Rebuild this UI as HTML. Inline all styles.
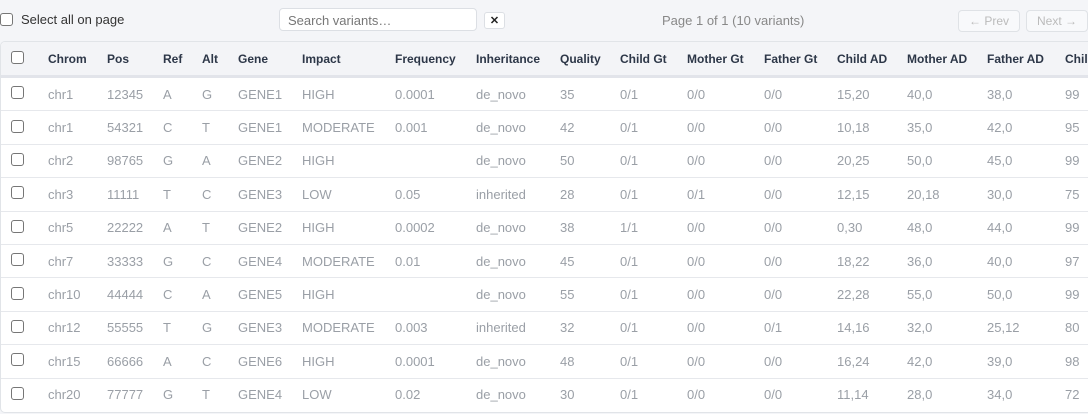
<!DOCTYPE html>
<html><head><style>
body{margin:0;background:#f4f5f8;font-family:"Liberation Sans",sans-serif;width:1088px;height:414px;overflow:hidden;position:relative}
.top{position:absolute;top:0;left:0;right:0;height:41px}
.sel{position:absolute;left:0;top:12px;font-size:13px;color:#333;display:flex;align-items:center}
.cb{display:inline-block;width:11px;height:11px;border:1px solid #767676;border-radius:3px;background:#fff;box-sizing:content-box}
.search{position:absolute;left:279px;top:8px;width:198px;height:23px;border:1px solid #dcdfe4;border-radius:4px;background:#fff;font-size:13px;color:#777;line-height:23px;padding-left:8px;box-sizing:border-box}
.x{position:absolute;left:484px;top:12px;width:21px;height:17px;border:1px solid #dcdfe4;border-radius:3px;background:#fff;font-size:11px;text-align:center;line-height:17px;font-weight:bold;box-sizing:border-box;color:#222}
.pg{position:absolute;left:662px;top:13px;font-size:13px;color:#888}
.btn{position:absolute;top:10px;height:22px;border:1px solid #dfe2e6;border-radius:4px;background:#f8f9fb;font-size:12px;color:#bbb;line-height:21px;text-align:center;box-sizing:border-box}
.tw{position:absolute;left:0;top:41px;width:1130px;height:372px;background:#fff;border:1px solid #e1e4e8;border-radius:5px;overflow:hidden;box-sizing:border-box}
table{border-collapse:collapse;table-layout:fixed;font-size:13px;width:1114px}
th{background:#f3f4f7;color:#2d3748;font-weight:bold;font-size:12px;text-align:left;height:33px;padding:0 0 0 10px;border-bottom:3px solid #e2e4ea;white-space:nowrap;overflow:hidden}
td{color:#9a9fa6;height:32.4px;padding:0 0 0 10px;border-bottom:1px solid #e6e8ec;white-space:nowrap;overflow:hidden}
tr:last-child td{border-bottom:none}
</style></head><body>
<div class="top">
<div class="sel"><span class="cb" style="margin-right:8px"></span>Select all on page</div>
<div class="search">Search variants…</div>
<div class="x">✕</div>
<div class="pg">Page 1 of 1 (10 variants)</div>
<div class="btn" style="left:958px;width:62px">← Prev</div>
<div class="btn" style="left:1026px;width:62px">Next →</div>
</div>
<div class="tw"><table>
<colgroup><col style="width:37px"><col style="width:59px"><col style="width:56px"><col style="width:39px"><col style="width:36px"><col style="width:64px"><col style="width:93px"><col style="width:81px"><col style="width:84px"><col style="width:60px"><col style="width:67px"><col style="width:77px"><col style="width:73px"><col style="width:70px"><col style="width:80px"><col style="width:78px"><col style="width:60px"></colgroup>
<tr><th><span class="cb"></span></th><th>Chrom</th><th>Pos</th><th>Ref</th><th>Alt</th><th>Gene</th><th>Impact</th><th>Frequency</th><th>Inheritance</th><th>Quality</th><th>Child Gt</th><th>Mother Gt</th><th>Father Gt</th><th>Child AD</th><th>Mother AD</th><th>Father AD</th><th>Child GQ</th></tr>
<tr><td><span class="cb"></span></td><td>chr1</td><td>12345</td><td>A</td><td>G</td><td>GENE1</td><td>HIGH</td><td>0.0001</td><td>de_novo</td><td>35</td><td>0/1</td><td>0/0</td><td>0/0</td><td>15,20</td><td>40,0</td><td>38,0</td><td>99</td></tr>
<tr><td><span class="cb"></span></td><td>chr1</td><td>54321</td><td>C</td><td>T</td><td>GENE1</td><td>MODERATE</td><td>0.001</td><td>de_novo</td><td>42</td><td>0/1</td><td>0/0</td><td>0/0</td><td>10,18</td><td>35,0</td><td>42,0</td><td>95</td></tr>
<tr><td><span class="cb"></span></td><td>chr2</td><td>98765</td><td>G</td><td>A</td><td>GENE2</td><td>HIGH</td><td></td><td>de_novo</td><td>50</td><td>0/1</td><td>0/0</td><td>0/0</td><td>20,25</td><td>50,0</td><td>45,0</td><td>99</td></tr>
<tr><td><span class="cb"></span></td><td>chr3</td><td>11111</td><td>T</td><td>C</td><td>GENE3</td><td>LOW</td><td>0.05</td><td>inherited</td><td>28</td><td>0/1</td><td>0/1</td><td>0/0</td><td>12,15</td><td>20,18</td><td>30,0</td><td>75</td></tr>
<tr><td><span class="cb"></span></td><td>chr5</td><td>22222</td><td>A</td><td>T</td><td>GENE2</td><td>HIGH</td><td>0.0002</td><td>de_novo</td><td>38</td><td>1/1</td><td>0/0</td><td>0/0</td><td>0,30</td><td>48,0</td><td>44,0</td><td>99</td></tr>
<tr><td><span class="cb"></span></td><td>chr7</td><td>33333</td><td>G</td><td>C</td><td>GENE4</td><td>MODERATE</td><td>0.01</td><td>de_novo</td><td>45</td><td>0/1</td><td>0/0</td><td>0/0</td><td>18,22</td><td>36,0</td><td>40,0</td><td>97</td></tr>
<tr><td><span class="cb"></span></td><td>chr10</td><td>44444</td><td>C</td><td>A</td><td>GENE5</td><td>HIGH</td><td></td><td>de_novo</td><td>55</td><td>0/1</td><td>0/0</td><td>0/0</td><td>22,28</td><td>55,0</td><td>50,0</td><td>99</td></tr>
<tr><td><span class="cb"></span></td><td>chr12</td><td>55555</td><td>T</td><td>G</td><td>GENE3</td><td>MODERATE</td><td>0.003</td><td>inherited</td><td>32</td><td>0/1</td><td>0/0</td><td>0/1</td><td>14,16</td><td>32,0</td><td>25,12</td><td>80</td></tr>
<tr><td><span class="cb"></span></td><td>chr15</td><td>66666</td><td>A</td><td>C</td><td>GENE6</td><td>HIGH</td><td>0.0001</td><td>de_novo</td><td>48</td><td>0/1</td><td>0/0</td><td>0/0</td><td>16,24</td><td>42,0</td><td>39,0</td><td>98</td></tr>
<tr><td><span class="cb"></span></td><td>chr20</td><td>77777</td><td>G</td><td>T</td><td>GENE4</td><td>LOW</td><td>0.02</td><td>de_novo</td><td>30</td><td>0/1</td><td>0/0</td><td>0/0</td><td>11,14</td><td>28,0</td><td>34,0</td><td>72</td></tr>
</table></div>
</body></html>
